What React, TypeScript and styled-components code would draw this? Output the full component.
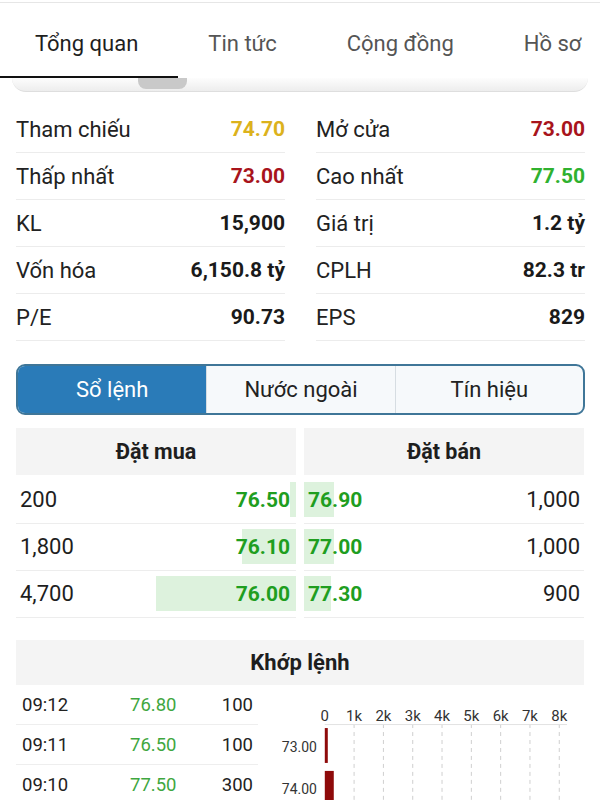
import styled, { createGlobalStyle } from "styled-components";

const GlobalStyle = createGlobalStyle`
  body {
    margin: 0;
    background: #fff;
    font-family: Roboto, "Noto Sans", sans-serif;
    color: #222;
  }
`;

const tabs = ["Tổng quan", "Tin tức", "Cộng đồng", "Hồ sơ"];

const stats: [string, string, string][] = [
  ["Tham chiếu", "74.70", "ref"],
  ["Mở cửa", "73.00", "down"],
  ["Thấp nhất", "73.00", "down"],
  ["Cao nhất", "77.50", "up"],
  ["KL", "15,900", ""],
  ["Giá trị", "1.2 tỷ", ""],
  ["Vốn hóa", "6,150.8 tỷ", ""],
  ["CPLH", "82.3 tr", ""],
  ["P/E", "90.73", ""],
  ["EPS", "829", ""],
];

const bids = [
  { vol: 200, price: "76.50" },
  { vol: 1800, price: "76.10" },
  { vol: 4700, price: "76.00" },
];
const asks = [
  { vol: 1000, price: "76.90" },
  { vol: 1000, price: "77.00" },
  { vol: 900, price: "77.30" },
];
const maxVol = 4700;

const trades = [
  ["09:12", "76.80", "100"],
  ["09:11", "76.50", "100"],
  ["09:10", "77.50", "300"],
];

const valueColors: Record<string, string> = {
  ref: "#dcb21c",
  down: "#a8141c",
  up: "#2fb12f",
  "": "#1a1a1a",
};

const App = () => {
  return (
    <Page>
      <GlobalStyle />
      <TabBar>
        {tabs.map((t, i) => (
          <Tab key={t} $active={i === 0}>
            {t}
          </Tab>
        ))}
      </TabBar>
      <HiddenStrip>
        <StripThumb />
      </HiddenStrip>

      <StatsGrid>
        {stats.map(([label, value, kind]) => (
          <StatRow key={label}>
            <span>{label}</span>
            <StatValue $color={valueColors[kind]}>{value}</StatValue>
          </StatRow>
        ))}
      </StatsGrid>

      <Segments>
        <Segment $active>Sổ lệnh</Segment>
        <Segment>Nước ngoài</Segment>
        <Segment>Tín hiệu</Segment>
      </Segments>

      <OrderBook>
        <div>
          <SectionHead>Đặt mua</SectionHead>
          {bids.map((b) => (
            <BookRow key={b.price}>
              <BookCell $side="bid" $fill={(b.vol / maxVol) * 50}>
                <span>{b.vol.toLocaleString("en-US")}</span>
                <Price>{b.price}</Price>
              </BookCell>
            </BookRow>
          ))}
        </div>
        <div>
          <SectionHead>Đặt bán</SectionHead>
          {asks.map((a) => (
            <BookRow key={a.price}>
              <BookCell $side="ask" $fill={(a.vol / maxVol) * 50}>
                <Price>{a.price}</Price>
                <span>{a.vol.toLocaleString("en-US")}</span>
              </BookCell>
            </BookRow>
          ))}
        </div>
      </OrderBook>

      <Matched>
        <SectionHead $small>Khớp lệnh</SectionHead>
        <MatchedBody>
          <TradeTable>
            {trades.map(([time, price, vol]) => (
              <TradeRow key={time}>
                <span>{time}</span>
                <TradePrice>{price}</TradePrice>
                <span>{vol}</span>
              </TradeRow>
            ))}
          </TradeTable>
          <VolumeChart />
        </MatchedBody>
      </Matched>
    </Page>
  );
};

const VolumeChart = () => {
  const x0 = 67;
  const step = 29.4;
  const ticks = ["0", "1k", "2k", "3k", "4k", "5k", "6k", "7k", "8k"];
  return (
    <svg width="327" height="116" viewBox="0 0 327 116">
      {ticks.map((t, i) => (
        <g key={t}>
          <text
            x={x0 + i * step}
            y={36}
            fontSize="15"
            fill="#333"
            textAnchor="middle"
            fontFamily="Roboto, sans-serif"
          >
            {t}
          </text>
          {i > 0 && (
            <line
              x1={x0 + i * step}
              x2={x0 + i * step}
              y1={39}
              y2={116}
              stroke="#cfcfcf"
              strokeDasharray="4 4"
            />
          )}
        </g>
      ))}
      <line x1={x0} x2={310} y1={39.5} y2={39.5} stroke="#e2e2e2" />
      <text x={59} y={67} fontSize="14" fill="#333" textAnchor="end" fontFamily="Roboto, sans-serif">
        73.00
      </text>
      <text x={59} y={109} fontSize="14" fill="#333" textAnchor="end" fontFamily="Roboto, sans-serif">
        74.00
      </text>
      <rect x={x0} y={43} width={3} height={35} fill="#8e0a0a" />
      <rect x={x0} y={86} width={9} height={35} fill="#8e0a0a" />
    </svg>
  );
};

export default App;

const Page = styled.div`
  width: 600px;
  height: 800px;
  overflow: hidden;
  background: #fff;
`;

const TabBar = styled.nav`
  display: flex;
  margin-top: 2px;
  height: 75px;
  border-top: 1px solid #e6e6e6;
  white-space: nowrap;
  overflow: hidden;
  position: relative;
  z-index: 1;
  background: #fff;
`;

const Tab = styled.div<{ $active?: boolean }>`
  flex: none;
  position: relative;
  display: flex;
  align-items: center;
  padding: 5px 35px 0;
  font-size: 22px;
  color: ${(p) => (p.$active ? "#1e1e1e" : "#555")};

  &::after {
    content: "";
    display: ${(p) => (p.$active ? "block" : "none")};
    position: absolute;
    left: 0;
    right: -5px;
    bottom: 0;
    height: 2px;
    background: #111;
  }
`;

const HiddenStrip = styled.div`
  height: 13px;
  margin: 0 12px;
  border-radius: 0 0 14px 14px;
  background: linear-gradient(#fdfdfd, #ededed);
  border-bottom: 1px solid #dedede;
  display: flex;
`;

const StripThumb = styled.div`
  margin-left: 126px;
  width: 49px;
  height: 11px;
  border-radius: 0 0 8px 8px;
  background: #c9c9c9;
`;

const StatsGrid = styled.div`
  display: grid;
  grid-template-columns: 1fr 1fr;
  column-gap: 31px;
  padding: 14px 15px 0 16px;
`;

const StatRow = styled.div`
  display: flex;
  justify-content: space-between;
  align-items: center;
  height: 46px;
  border-bottom: 1px solid #ececec;
  font-size: 22px;
  color: #222;
`;

const StatValue = styled.span<{ $color: string }>`
  font-weight: 700;
  font-size: 21px;
  color: ${(p) => p.$color};
`;

const Segments = styled.div`
  display: grid;
  grid-template-columns: 1fr 1fr 1fr;
  margin: 23px 15px 0 16px;
  height: 51px;
  box-sizing: border-box;
  border: 2px solid #3f7698;
  border-radius: 9px;
  overflow: hidden;
  background: #f6f9fb;
`;

const Segment = styled.div<{ $active?: boolean }>`
  display: flex;
  align-items: center;
  justify-content: center;
  font-size: 22px;
  color: ${(p) => (p.$active ? "#fff" : "#222")};
  background: ${(p) => (p.$active ? "#2a7bb8" : "transparent")};
  & + & {
    border-left: 1px solid #d6dde2;
  }
`;

const OrderBook = styled.div`
  display: grid;
  grid-template-columns: 1fr 1fr;
  column-gap: 8px;
  padding: 13px 16px 0;
`;

const SectionHead = styled.div<{ $small?: boolean }>`
  height: ${(p) => (p.$small ? "45px" : "47px")};
  display: flex;
  align-items: center;
  justify-content: center;
  background: #f4f4f4;
  font-weight: 700;
  font-size: ${(p) => (p.$small ? "22px" : "21.5px")};
  color: #1e1e1e;
`;

const BookRow = styled.div`
  height: 47px;
  padding: 5px 0 6px;
  box-sizing: border-box;
  border-bottom: 1px solid #ededed;
  &:nth-child(2) {
    margin-top: 2px;
  }
`;

const BookCell = styled.div<{ $side: "bid" | "ask"; $fill: number }>`
  height: 100%;
  display: flex;
  align-items: center;
  justify-content: space-between;
  padding: ${(p) => (p.$side === "bid" ? "0 6px 0 4px" : "0 4px 0 4px")};
  font-size: 22px;
  color: #1e1e1e;
  background: linear-gradient(
    ${(p) => (p.$side === "bid" ? "to left" : "to right")},
    #ddf2dd ${(p) => p.$fill}%,
    transparent ${(p) => p.$fill}%
  );
`;

const Price = styled.span`
  font-weight: 700;
  font-size: 21px;
  color: #1f9e1f;
`;

const Matched = styled.div`
  margin: 22px 16px 0;
`;

const MatchedBody = styled.div`
  display: flex;
  align-items: flex-start;
`;

const TradeTable = styled.div`
  width: 242px;
  flex: none;
`;

const TradeRow = styled.div`
  display: grid;
  grid-template-columns: 108px 1fr auto;
  align-items: center;
  height: 39px;
  padding: 0 5px 0 6px;
  border-bottom: 1px solid #eeeeee;
  font-size: 18.5px;
  color: #222;
`;

const TradePrice = styled.span`
  color: #3fa73f;
`;
